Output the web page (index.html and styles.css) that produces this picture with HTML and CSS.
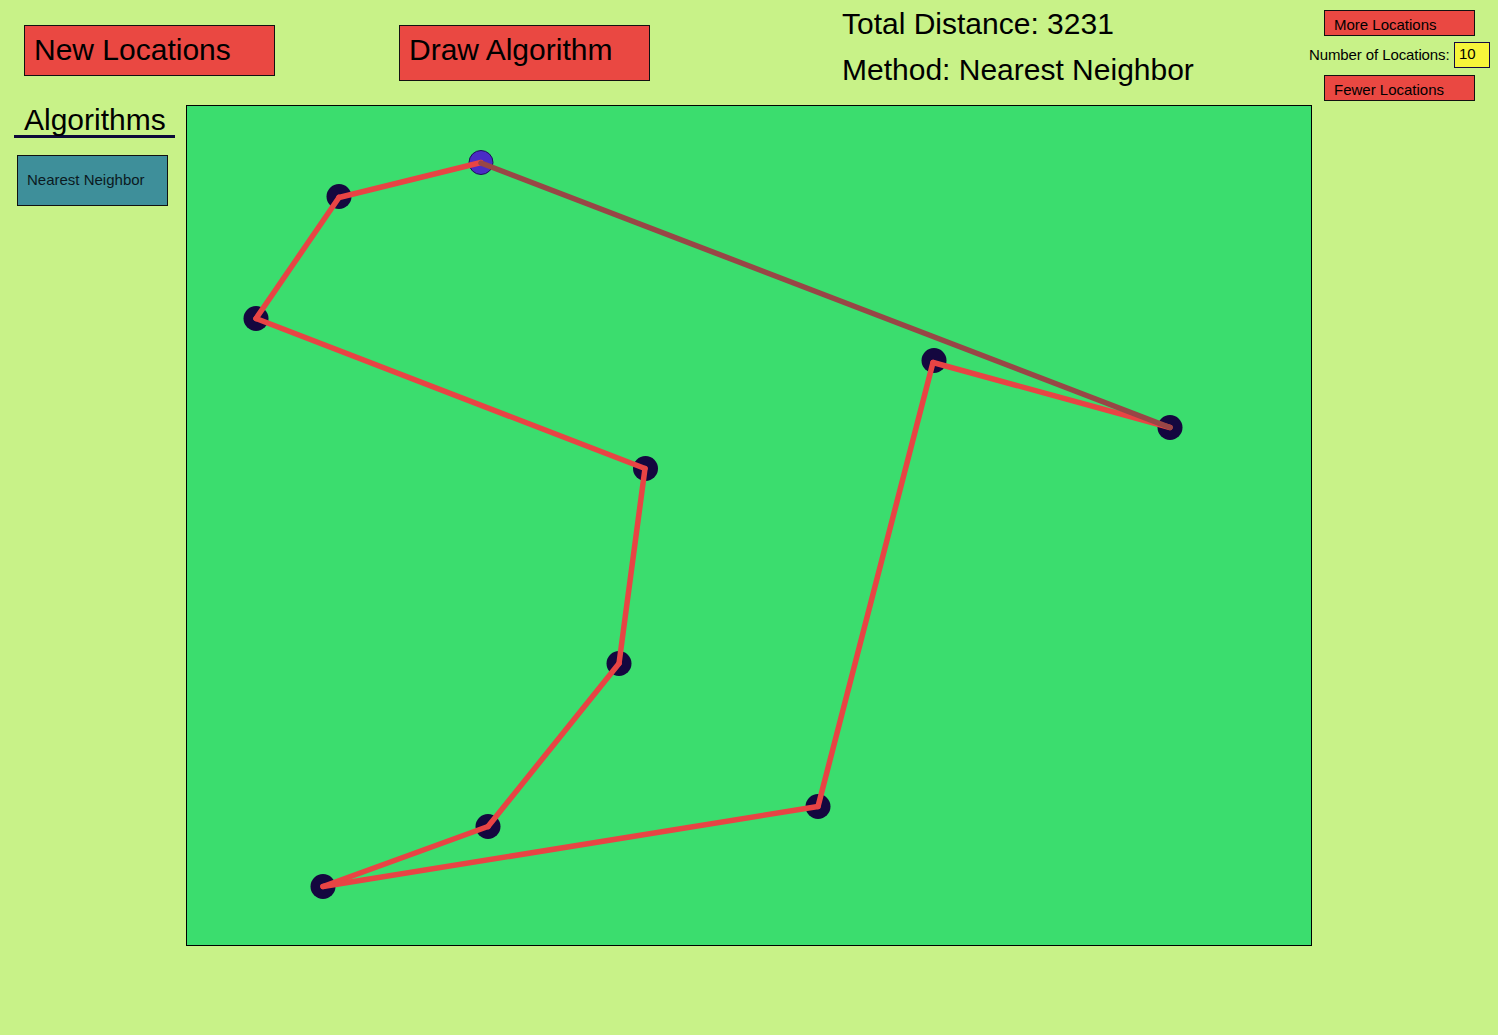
FILE: index.html
```html
<!DOCTYPE html>
<html>
<head>
<meta charset="utf-8">
<title>TSP Visualizer</title>
<link rel="stylesheet" href="styles.css">
</head>
<body>
<div class="page">
  <header class="top">
    <button class="btn big new">New Locations</button>
    <button class="btn big draw">Draw Algorithm</button>
    <div class="stats">
      <div class="stat">Total Distance: 3231</div>
      <div class="stat">Method: Nearest Neighbor</div>
    </div>
    <div class="controls">
      <button class="btn small">More Locations</button>
      <div class="count-row">
        <span class="count-label">Number of Locations:</span>
        <span class="count-box">10</span>
      </div>
      <button class="btn small">Fewer Locations</button>
    </div>
  </header>
  <main class="main">
    <aside class="sidebar">
      <h2 class="side-title">Algorithms</h2>
      <button class="algo">Nearest Neighbor</button>
    </aside>
    <div class="board">
      <svg class="map" width="1124" height="839" viewBox="0 0 1124 839" xmlns="http://www.w3.org/2000/svg">
        <g class="nodes">
          <circle cx="294" cy="56.5" r="12" fill="#4a2cc6" stroke="#1c0f55" stroke-width="1"/>
          <circle cx="152" cy="90.5" r="12.5" fill="#14073f"/>
          <circle cx="69" cy="212.5" r="12.5" fill="#14073f"/>
          <circle cx="458.5" cy="362.5" r="12.5" fill="#14073f"/>
          <circle cx="432" cy="557.5" r="12.5" fill="#14073f"/>
          <circle cx="301" cy="720.5" r="12.5" fill="#14073f"/>
          <circle cx="136" cy="780.5" r="12.5" fill="#14073f"/>
          <circle cx="631" cy="700.5" r="12.5" fill="#14073f"/>
          <circle cx="747" cy="254.5" r="12.5" fill="#14073f"/>
          <circle cx="983" cy="321.5" r="12.5" fill="#14073f"/>
        </g>
        <g stroke="#e84444" stroke-width="5.5" stroke-linecap="round">
          <line x1="294" y1="56.5" x2="152" y2="91.5"/>
          <line x1="152" y1="91.5" x2="69" y2="212.5"/>
          <line x1="69" y1="212.5" x2="458" y2="362.5"/>
          <line x1="458" y1="362.5" x2="432" y2="557.5"/>
          <line x1="432" y1="557.5" x2="301" y2="720.5"/>
          <line x1="301" y1="720.5" x2="136" y2="780.5"/>
          <line x1="136" y1="780.5" x2="631" y2="700.5"/>
          <line x1="631" y1="700.5" x2="746" y2="256.5"/>
          <line x1="746" y1="256.5" x2="983" y2="321.5"/>
        </g>
        <line x1="983" y1="321.5" x2="294" y2="57" stroke="#984646" stroke-width="5.5" stroke-linecap="round"/>
      </svg>
    </div>
  </main>
</div>
</body>
</html>
```

FILE: styles.css
```css
html, body {
  margin: 0;
  padding: 0;
}

body {
  background: #c8f288;
  font-family: "Liberation Sans", Arial, sans-serif;
  color: #000;
  width: 1498px;
  height: 1035px;
  overflow: hidden;
}

.page {
  display: flex;
  flex-direction: column;
}

.top {
  display: flex;
  align-items: flex-start;
  height: 105px;
}

.btn {
  font-family: "Liberation Sans", Arial, sans-serif;
  background: #ea4842;
  border: 1px solid #111;
  box-sizing: border-box;
  text-align: left;
  color: #000;
  margin: 0;
  cursor: pointer;
}

.btn.big {
  width: 251px;
  font-size: 30px;
  line-height: 30px;
  padding: 9px 8px 0 9px;
  margin-top: 25px;
  display: flex;
  align-items: flex-start;
}

.btn.new {
  height: 51px;
  margin-left: 24px;
}

.btn.draw {
  height: 56px;
  margin-left: 124px;
}

.stats {
  margin-left: 192px;
  margin-top: 1px;
  font-size: 30px;
  line-height: 46px;
  white-space: nowrap;
}

.controls {
  margin-left: auto;
  margin-right: 8px;
  margin-top: 10px;
  display: flex;
  flex-direction: column;
  width: 181px;
}

.btn.small {
  width: 151px;
  height: 26px;
  margin-left: 15px;
  font-size: 15px;
  line-height: 15px;
  padding: 6px 8px 0 9px;
  display: flex;
  align-items: flex-start;
}

.count-row {
  display: flex;
  align-items: center;
  margin-top: 6px;
  margin-bottom: 7px;
  height: 26px;
  font-size: 15px;
}

.count-label {
  white-space: nowrap;
  letter-spacing: -0.1px;
  margin-top: -2px;
}

.count-box {
  margin-left: auto;
  width: 36px;
  height: 26px;
  box-sizing: border-box;
  background: #f6f53a;
  border: 1px solid #140a40;
  padding: 2px 0 0 4px;
  line-height: 18px;
}

.main {
  display: flex;
  align-items: flex-start;
}

.sidebar {
  width: 186px;
  flex: none;
  display: flex;
  flex-direction: column;
  align-items: flex-start;
}

.side-title {
  margin: 0 0 0 14px;
  padding: 0 10px;
  font-weight: normal;
  font-size: 30px;
  line-height: 30px;
  width: 161px;
  box-sizing: border-box;
  border-bottom: 3px solid #0e0a3a;
  white-space: nowrap;
}

.algo {
  margin: 17px 0 0 17px;
  width: 151px;
  height: 51px;
  box-sizing: border-box;
  background: #3e8f9a;
  border: 1px solid #111;
  font-family: "Liberation Sans", Arial, sans-serif;
  font-size: 15px;
  color: #0b1a22;
  text-align: left;
  padding: 0 8px 2px 9px;
  cursor: pointer;
}

.board {
  width: 1126px;
  height: 841px;
  box-sizing: border-box;
  border: 1px solid #000;
  background: #3bdd6e;
  flex: none;
}

.map {
  display: block;
}
```
